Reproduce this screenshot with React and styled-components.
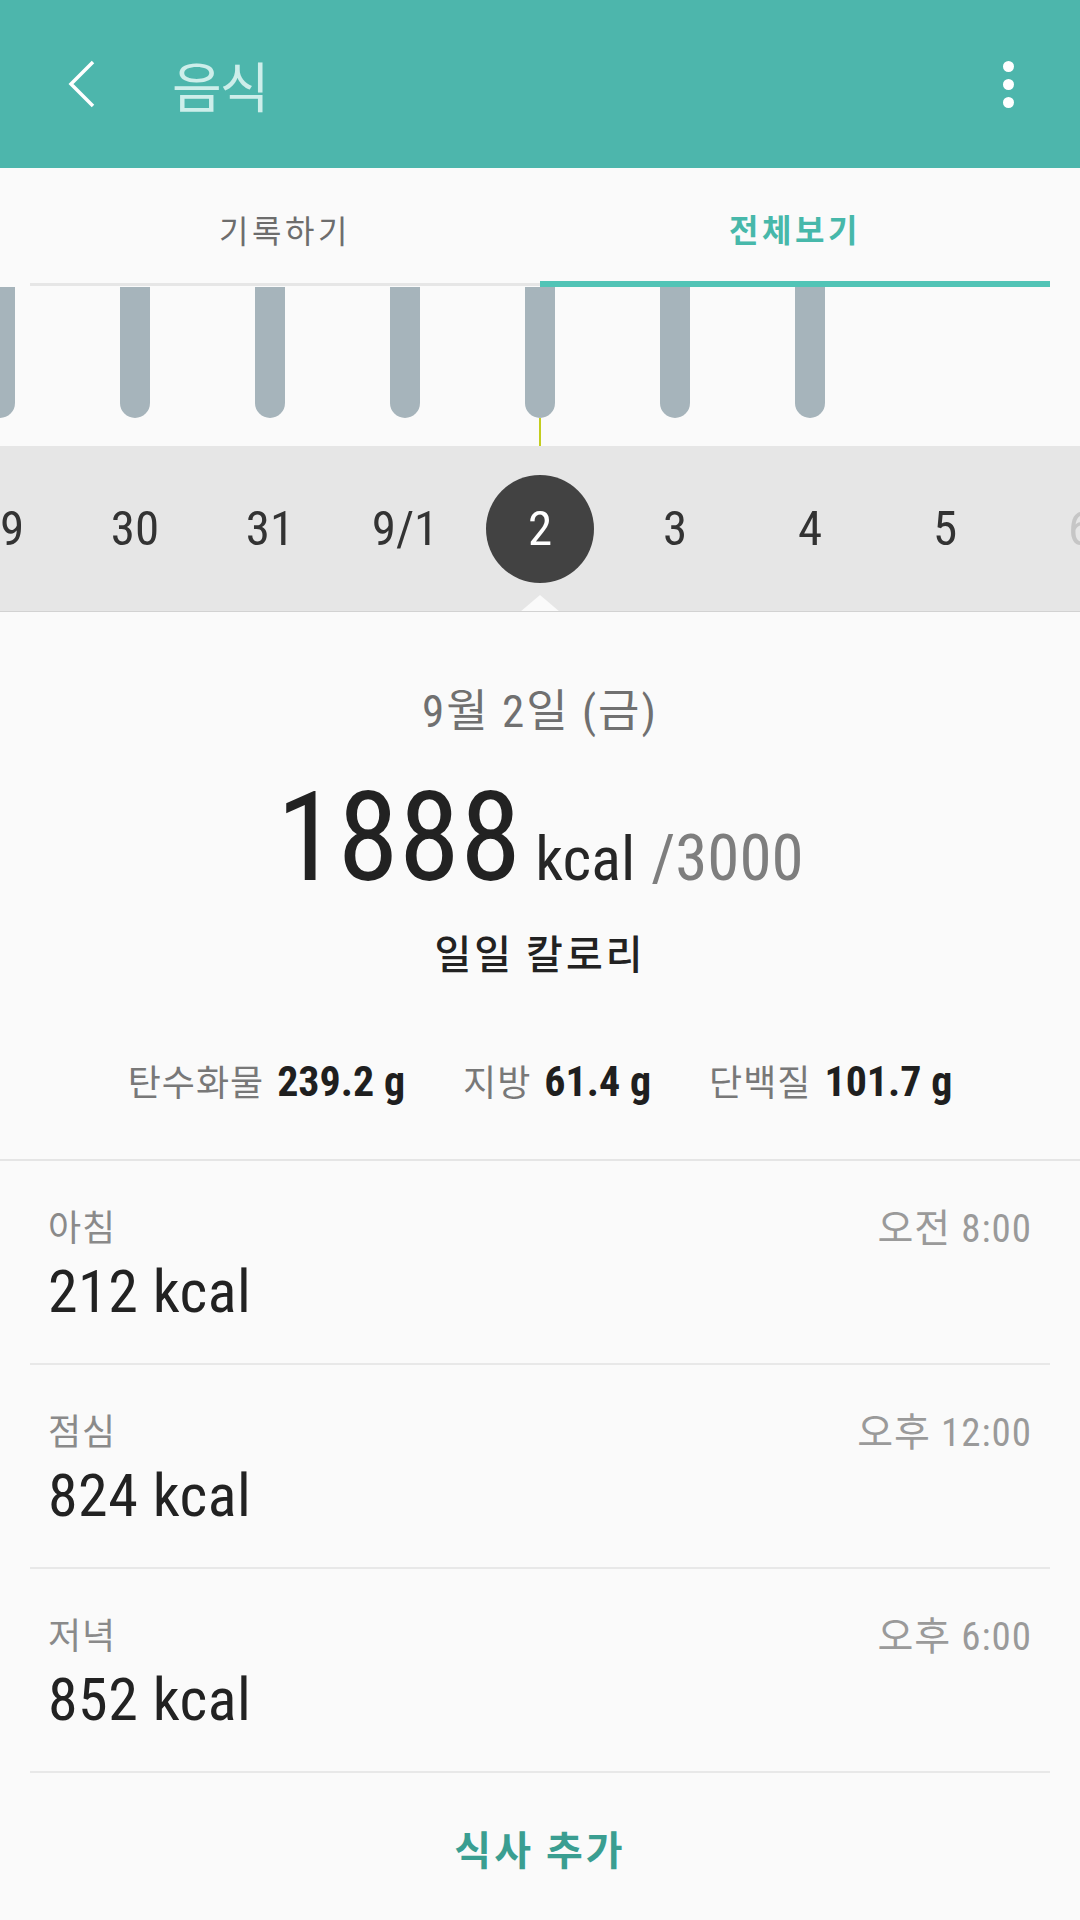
import React from "react";
import styled, { createGlobalStyle } from "styled-components";

const KR = `"Noto Sans CJK KR", "Noto Sans", sans-serif`;
const NUM = `"Liberation Sans Narrow", "Roboto Condensed", "Noto Sans CJK KR", sans-serif`;

const GlobalStyle = createGlobalStyle`
  body {
    margin: 0;
    background: #fafafa;
    font-family: ${KR};
  }
`;

const Page = styled.div`
  width: 1080px;
  height: 1920px;
  overflow: hidden;
  background: #fafafa;
`;

const Header = styled.header`
  height: 168px;
  background: #4db6ac;
  display: flex;
  align-items: center;
  padding-left: 68px;
`;

const Title = styled.h1`
  margin: 0 0 0 76px;
  font-family: ${KR};
  font-weight: 400;
  font-size: 54px;
  color: #cdeeea;
  letter-spacing: -2px;
`;

const Dots = styled.div`
  margin-left: auto;
  margin-right: 66px;
  display: flex;
  flex-direction: column;
  gap: 7px;
`;

const Dot = styled.span`
  width: 11px;
  height: 11px;
  border-radius: 50%;
  background: #fff;
`;

const Tabs = styled.div`
  display: flex;
  align-items: flex-start;
  padding: 0 30px;
  height: 119px;
  position: relative;
  z-index: 1;
`;

const Tab = styled.div`
  flex: 1;
  box-sizing: border-box;
  height: ${(p) => (p.$active ? "119px" : "118px")};
  padding-top: 6px;
  display: flex;
  align-items: center;
  justify-content: center;
  font-size: 32px;
  letter-spacing: 3.5px;
  font-weight: ${(p) => (p.$active ? 700 : 400)};
  color: ${(p) => (p.$active ? "#47b8aa" : "#6d6d6d")};
  border-bottom: ${(p) => (p.$active ? "6px solid #52c4b6" : "3px solid #e6e6e6")};
`;

const Chart = styled.div`
  height: 159px;
  overflow: hidden;
`;

const ChartRow = styled.div`
  display: flex;
  gap: 105px;
  margin-left: -15px;
`;

const Column = styled.div`
  width: 30px;
  flex-shrink: 0;
  display: flex;
  flex-direction: column;
  align-items: center;
`;

const Bar = styled.div`
  width: 30px;
  height: 131px;
  background: #a6b4bb;
  border-radius: 0 0 15px 15px;
`;

const Stem = styled.div`
  width: 2px;
  height: 28px;
  background: #c3cd1f;
`;

const DateStrip = styled.div`
  position: relative;
  height: 166px;
  box-sizing: border-box;
  background: #e6e6e6;
  border-bottom: 1px solid #d2d2d2;
  overflow: hidden;
`;

const DayRow = styled.div`
  display: flex;
  height: 100%;
  margin-left: -67.5px;
`;

const Day = styled.div`
  width: 135px;
  flex-shrink: 0;
  display: flex;
  align-items: center;
  justify-content: center;
  font-family: ${NUM};
  font-size: 49px;
  color: ${(p) => (p.$faded ? "#c6c6c6" : "#333")};
`;

const Selected = styled.div`
  width: 108px;
  height: 108px;
  border-radius: 50%;
  background: #424242;
  color: #fff;
  display: flex;
  align-items: center;
  justify-content: center;
`;

const Pointer = styled.div`
  position: absolute;
  left: 520px;
  bottom: -1px;
  width: 40px;
  height: 17px;
  background: #fafafa;
  clip-path: polygon(50% 0, 100% 100%, 0 100%);
`;

const Summary = styled.section`
  display: flex;
  flex-direction: column;
  align-items: center;
  padding-bottom: 49px;
  border-bottom: 2px solid #e5e5e5;
`;

const DateLabel = styled.div`
  margin-top: 70px;
  line-height: 60px;
  font-family: ${NUM};
  font-size: 45px;
  letter-spacing: 2px;
  color: #707070;
`;

const TotalRow = styled.div`
  margin-top: 31px;
  height: 130px;
  display: flex;
  align-items: baseline;
  font-family: ${NUM};
  line-height: 130px;
`;

const Total = styled.span`
  font-size: 124px;
  color: #222;
`;

const Unit = styled.span`
  margin-left: 14px;
  font-size: 62px;
  color: #262626;
`;

const Goal = styled.span`
  margin-left: 16px;
  font-size: 65px;
  color: #7e7e7e;
`;

const DailyLabel = styled.div`
  margin-top: 21px;
  line-height: 56px;
  font-size: 40px;
  font-weight: 500;
  color: #222;
  letter-spacing: 3px;
`;

const Macros = styled.div`
  margin-top: 72px;
  line-height: 56px;
  display: flex;
  gap: 58px;
`;

const Macro = styled.div`
  display: flex;
  align-items: baseline;
  gap: 13px;
`;

const MacroName = styled.span`
  font-size: 36px;
  letter-spacing: 1px;
  color: #787878;
`;

const MacroValue = styled.span`
  font-family: ${NUM};
  font-size: 42px;
  font-weight: 700;
  color: #1f1f1f;
`;

const MealRow = styled.div`
  margin: 0 30px;
  height: 204px;
  box-sizing: border-box;
  padding: 40px 18px 0;
  border-bottom: 2px solid #e8e8e8;
`;

const MealTop = styled.div`
  display: flex;
  justify-content: space-between;
  line-height: 56px;
  font-family: ${NUM};
  font-size: 36px;
`;

const MealName = styled.span`
  color: #8a8a8a;
  letter-spacing: 1px;
`;

const MealTime = styled.span`
  color: #9a9a9a;
  font-size: 39px;
  letter-spacing: 1px;
`;

const MealKcal = styled.div`
  line-height: 70px;
  font-family: ${NUM};
  font-size: 60px;
  letter-spacing: 0.5px;
  color: #222;
`;

const AddMeal = styled.div`
  height: 149px;
  display: flex;
  align-items: center;
  justify-content: center;
  font-size: 40px;
  font-weight: 700;
  color: #3a9e91;
  letter-spacing: 3px;
`;

const days = ["29", "30", "31", "9/1", "2", "3", "4", "5", "6"];
const meals = [
  { name: "아침", time: "오전 8:00", kcal: 212 },
  { name: "점심", time: "오후 12:00", kcal: 824 },
  { name: "저녁", time: "오후 6:00", kcal: 852 },
];
const macros = [
  ["탄수화물", "239.2 g"],
  ["지방", "61.4 g"],
  ["단백질", "101.7 g"],
];

export default function App() {
  return (
    <Page>
      <GlobalStyle />
      <Header>
        <svg width="28" height="48" viewBox="0 0 28 48">
          <polyline points="25,2 3,24 25,46" fill="none" stroke="#fff" strokeWidth="3.5" />
        </svg>
        <Title>음식</Title>
        <Dots>
          <Dot />
          <Dot />
          <Dot />
        </Dots>
      </Header>

      <Tabs>
        <Tab>기록하기</Tab>
        <Tab $active>전체보기</Tab>
      </Tabs>

      <Chart>
        <ChartRow>
          {Array(7)
            .fill(0)
            .map((_, i) => (
              <Column key={i}>
                <Bar />
                {i === 4 && <Stem />}
              </Column>
            ))}
        </ChartRow>
      </Chart>

      <DateStrip>
        <DayRow>
          {days.map((d, i) => (
            <Day key={d} $faded={i === days.length - 1}>
              {d === "2" ? <Selected>{d}</Selected> : d}
            </Day>
          ))}
        </DayRow>
        <Pointer />
      </DateStrip>

      <Summary>
        <DateLabel>9월 2일 (금)</DateLabel>
        <TotalRow>
          <Total>1888</Total>
          <Unit>kcal</Unit>
          <Goal>/3000</Goal>
        </TotalRow>
        <DailyLabel>일일 칼로리</DailyLabel>
        <Macros>
          {macros.map(([n, v]) => (
            <Macro key={n}>
              <MacroName>{n}</MacroName>
              <MacroValue>{v}</MacroValue>
            </Macro>
          ))}
        </Macros>
      </Summary>

      {meals.map((m) => (
        <MealRow key={m.name}>
          <MealTop>
            <MealName>{m.name}</MealName>
            <MealTime>{m.time}</MealTime>
          </MealTop>
          <MealKcal>{m.kcal} kcal</MealKcal>
        </MealRow>
      ))}

      <AddMeal>식사 추가</AddMeal>
    </Page>
  );
}
